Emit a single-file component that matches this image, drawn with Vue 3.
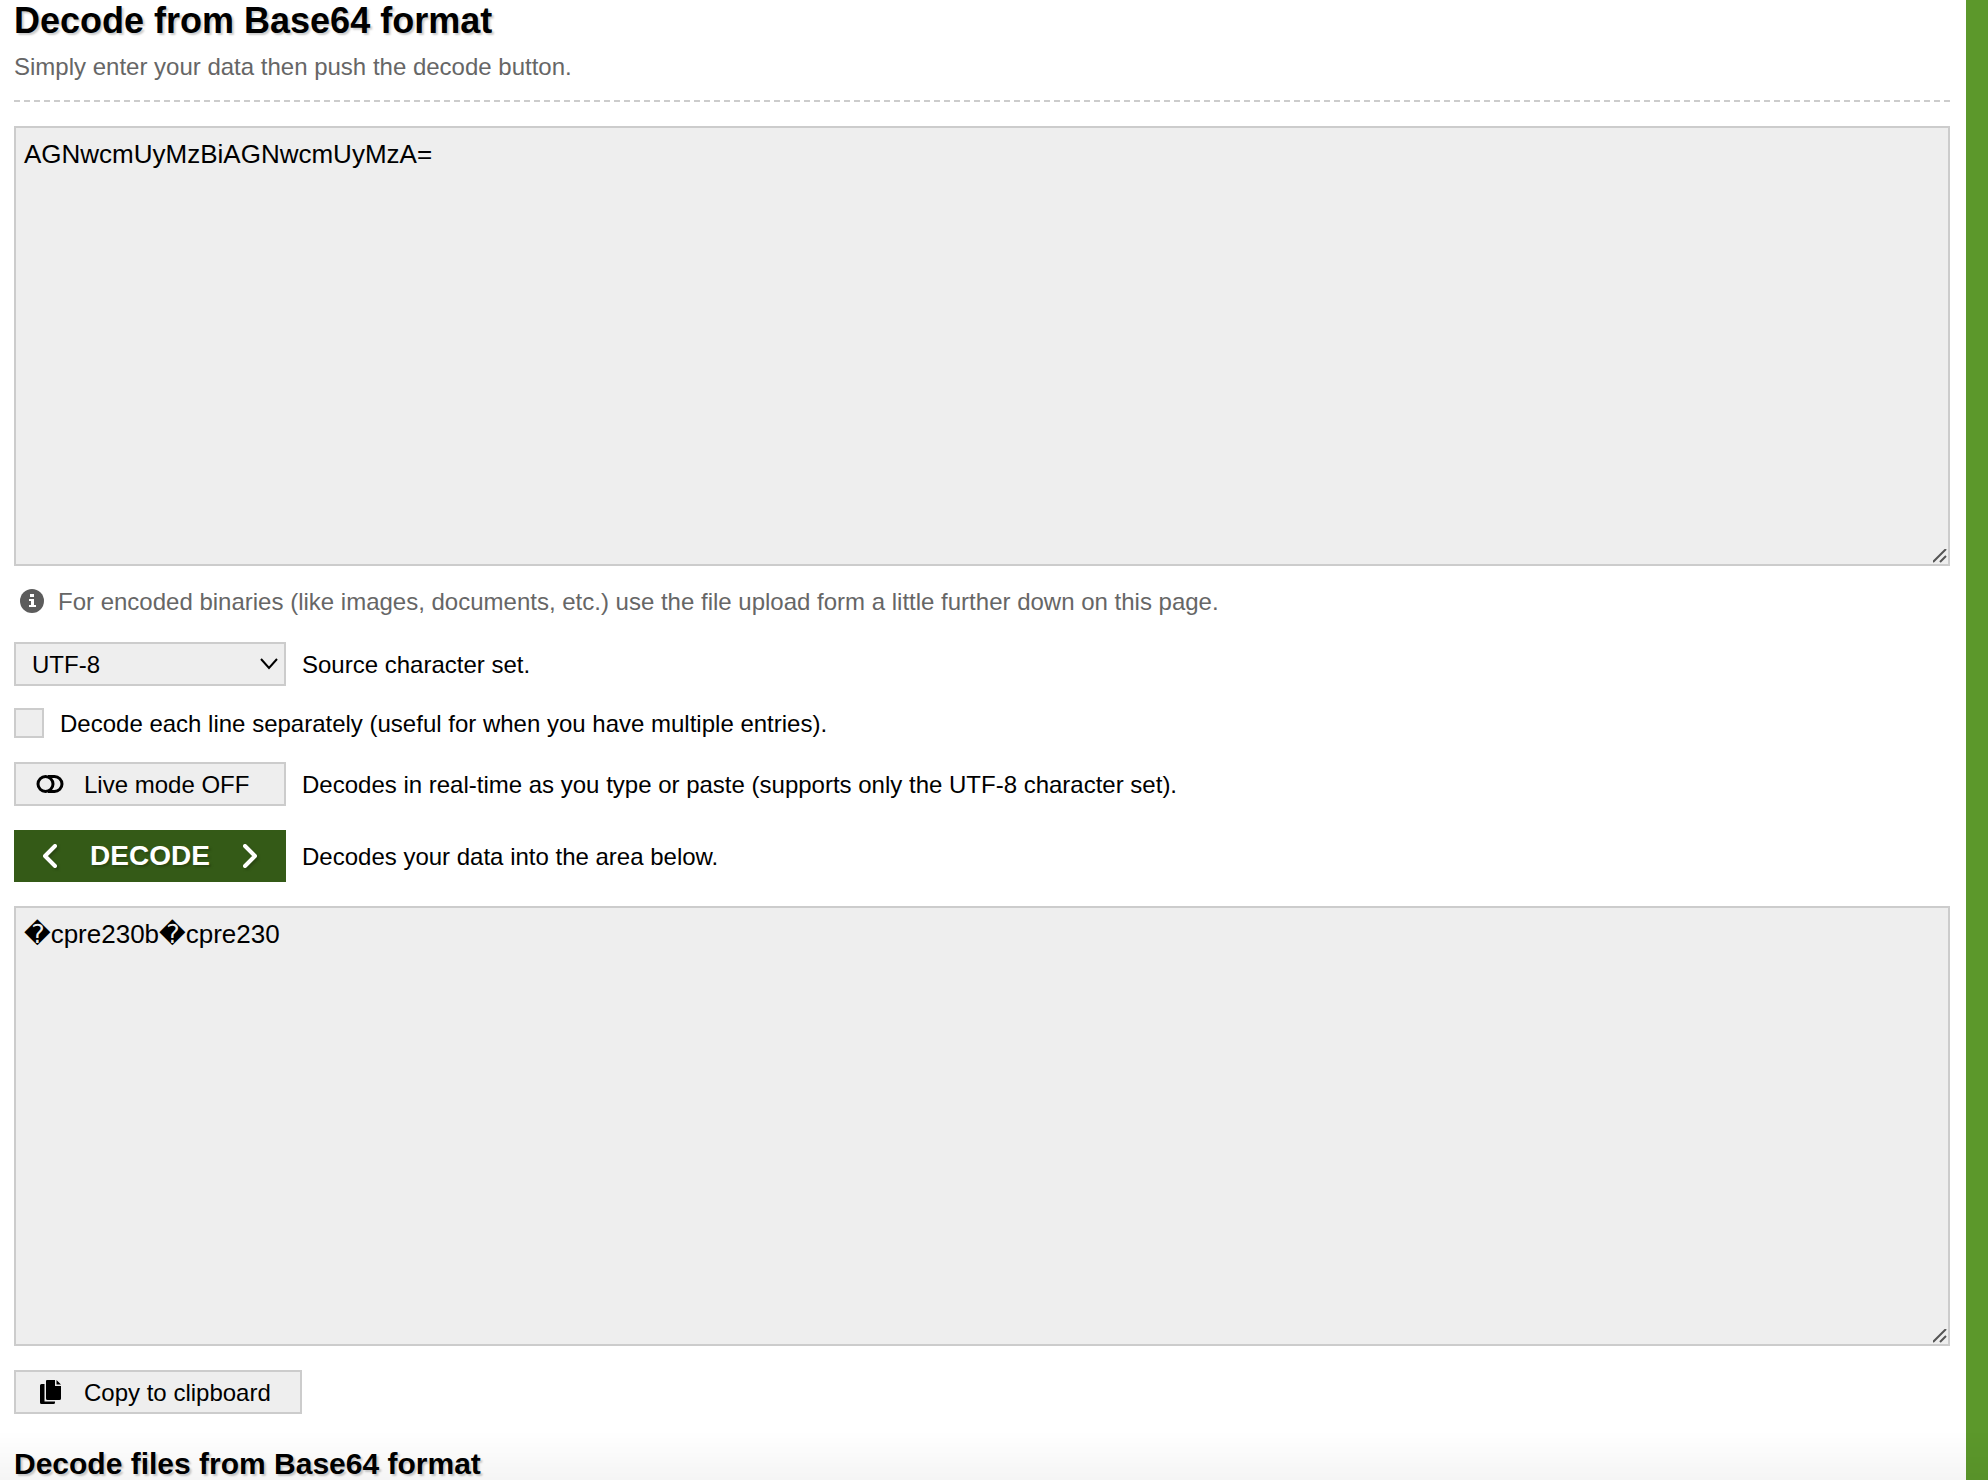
<script setup>
import { ref } from 'vue'

const source = ref('AGNwcmUyMzBiAGNwcmUyMzA=')
const result = ref('\uFFFDcpre230b\uFFFDcpre230')
const charset = ref('UTF-8')
const eachLine = ref(false)
</script>

<template>
  <div class="page">
    <main class="panel">
      <header class="intro">
        <h1>Decode from Base64 format</h1>
        <p>Simply enter your data then push the decode button.</p>
      </header>

      <form class="form" @submit.prevent>
        <textarea v-model="source" aria-label="Base64 data" spellcheck="false"></textarea>

        <p class="hint">
          <svg class="info" viewBox="0 0 24 24" aria-hidden="true">
            <circle cx="12" cy="12" r="12" />
            <path fill="#fff" d="M10 5h4v3h-4zM9 10h5v6h2v2H9v-2h2v-4H9z" />
          </svg>
          <span class="label">For encoded binaries (like images, documents, etc.) use the file upload form a little further down on this page.</span>
        </p>

        <div class="row charset">
          <span class="select-box">
            <select id="charset" v-model="charset" class="control">
              <option>UTF-8</option>
              <option>ASCII</option>
            </select>
            <svg class="arrow" viewBox="0 0 18 12" aria-hidden="true"><path d="M1 1l8 9 8-9" /></svg>
          </span>
          <label for="charset" class="label">Source character set.</label>
        </div>

        <div class="row lines">
          <input id="lines" v-model="eachLine" type="checkbox" />
          <label for="lines" class="label">Decode each line separately (useful for when you have multiple entries).</label>
        </div>

        <div class="row">
          <button id="live" type="button" class="control live">
            <svg class="toggle" viewBox="0 0 28 18" aria-hidden="true">
              <circle cx="9.500" cy="9" r="7.500" />
              <path d="M12 1.500h6.500a7.500 7.500 0 0 1 0 15H12" />
            </svg>
            <span class="label">Live mode OFF</span>
          </button>
          <span class="label">Decodes in real-time as you type or paste (supports only the UTF-8 character set).</span>
        </div>

        <div class="row">
          <button type="submit" class="decode">
            <svg viewBox="0 0 16 24" aria-hidden="true"><path d="M13 2L3 12l10 10" /></svg>
            DECODE
            <svg viewBox="0 0 16 24" aria-hidden="true"><path d="M3 2l10 10L3 22" /></svg>
          </button>
          <span class="label">Decodes your data into the area below.</span>
        </div>

        <textarea v-model="result" aria-label="Decoded data" spellcheck="false"></textarea>

        <button type="button" class="control copy">
          <svg viewBox="0 0 22 24" aria-hidden="true">
            <path d="M7 0h8v6h6v12.500q0 1.500-1.500 1.500h-12Q6 20 6 18.500V1Q6 0 7 0zM16.500 0L21 4.500h-4.500z" />
            <path d="M0 5.500Q0 4 1.500 4H4.500v17.500H15v1q0 1.500-1.500 1.500h-12Q0 24 0 22.500z" />
          </svg>
          <span class="label">Copy to clipboard</span>
        </button>
      </form>

      <h2>Decode files from Base64 format</h2>
    </main>
    <div class="fade"></div>
  </div>
</template>

<style>
body {
  margin: 0;
  background: #5c982b;
}
</style>

<style scoped>
.page {
  min-height: 100vh;
  padding-right: 22px;
  box-sizing: border-box;
  display: flex;
  font: 24px/28px "Liberation Sans", Arial, sans-serif;
  color: #000;
}
.panel {
  flex: 1;
  min-width: 0;
  padding: 0 16px 0 14px;
  background: #fff;
}
h1,
h2,
p {
  margin: 0;
}
h1,
h2 {
  text-shadow: 2px 2px 2px #ccc;
}
h1 {
  font-size: 36px;
  line-height: 42px;
}
h2 {
  margin-top: 34px;
  font-size: 30px;
  line-height: 32px;
}
.intro {
  padding-bottom: 14px;
  border-bottom: 2px dashed #ccc;
}
.intro p {
  margin-top: 6px;
  line-height: 38px;
  color: #666;
}
textarea {
  display: block;
  box-sizing: border-box;
  width: 100%;
  height: 440px;
  margin: 24px 0 0;
  padding: 10px 8px;
  border: 2px solid #ccc;
  border-radius: 0;
  background: #eee;
  color: #000;
  font: 26px/32px "Liberation Sans", Arial, "DejaVu Sans", sans-serif;
  resize: vertical;
  outline: none;
}
textarea::-webkit-resizer {
  background: url("data:image/svg+xml,%3Csvg xmlns='http://www.w3.org/2000/svg' viewBox='0 0 15 15'%3E%3Cpath d='M0 13L13 0M7 13l6-6' fill='none' stroke='%23555' stroke-width='2'/%3E%3C/svg%3E") no-repeat;
}
.label {
  padding-top: 2px;
}
.hint {
  display: flex;
  align-items: center;
  gap: 14px;
  margin-top: 20px;
  padding-left: 6px;
  color: #666;
}
.info {
  width: 24px;
  height: 24px;
  fill: #5c5c5c;
}
.row {
  display: flex;
  align-items: center;
  gap: 16px;
  margin-top: 24px;
}
.charset {
  margin-top: 26px;
}
.lines {
  margin-top: 22px;
}
.control {
  box-sizing: border-box;
  width: 272px;
  height: 44px;
  margin: 0;
  border: 2px solid #ccc;
  border-radius: 0;
  background: #eee;
  color: #000;
  font: inherit;
}
.select-box {
  display: flex;
  position: relative;
}
select.control {
  appearance: none;
  padding: 2px 16px 0;
}
.arrow {
  position: absolute;
  right: 8px;
  top: 16px;
  width: 18px;
  height: 12px;
  fill: none;
  stroke: #000;
  stroke-width: 2;
  pointer-events: none;
}
input {
  appearance: none;
  box-sizing: border-box;
  width: 30px;
  height: 30px;
  margin: 0;
  border: 2px solid #ccc;
  background: #eee;
}
button.control {
  display: flex;
  align-items: center;
  gap: 20px;
  padding: 0 20px;
}
.toggle {
  width: 28px;
  height: 18px;
  fill: none;
  stroke: #000;
  stroke-width: 3;
}
.decode {
  display: flex;
  align-items: center;
  justify-content: space-between;
  width: 272px;
  height: 52px;
  padding: 0 28px;
  border: 0;
  background: #345a17;
  color: #fff;
  font: bold 28px/32px "Liberation Sans", Arial, sans-serif;
  text-shadow: 2px 2px 2px #2a4812;
}
.decode svg {
  width: 16px;
  height: 24px;
  fill: none;
  stroke: #fff;
  stroke-width: 4;
  stroke-linecap: round;
  stroke-linejoin: round;
  filter: drop-shadow(2px 2px 1px #2a4812);
}
.control.copy {
  width: 288px;
  margin-top: 24px;
}
.copy svg {
  width: 22px;
  height: 24px;
  margin: 0 2px 0 4px;
}
.fade {
  position: fixed;
  left: 0;
  right: 0;
  bottom: 0;
  height: 50px;
  background: linear-gradient(rgba(0, 0, 0, 0), rgba(0, 0, 0, 0.04));
  pointer-events: none;
}
</style>
